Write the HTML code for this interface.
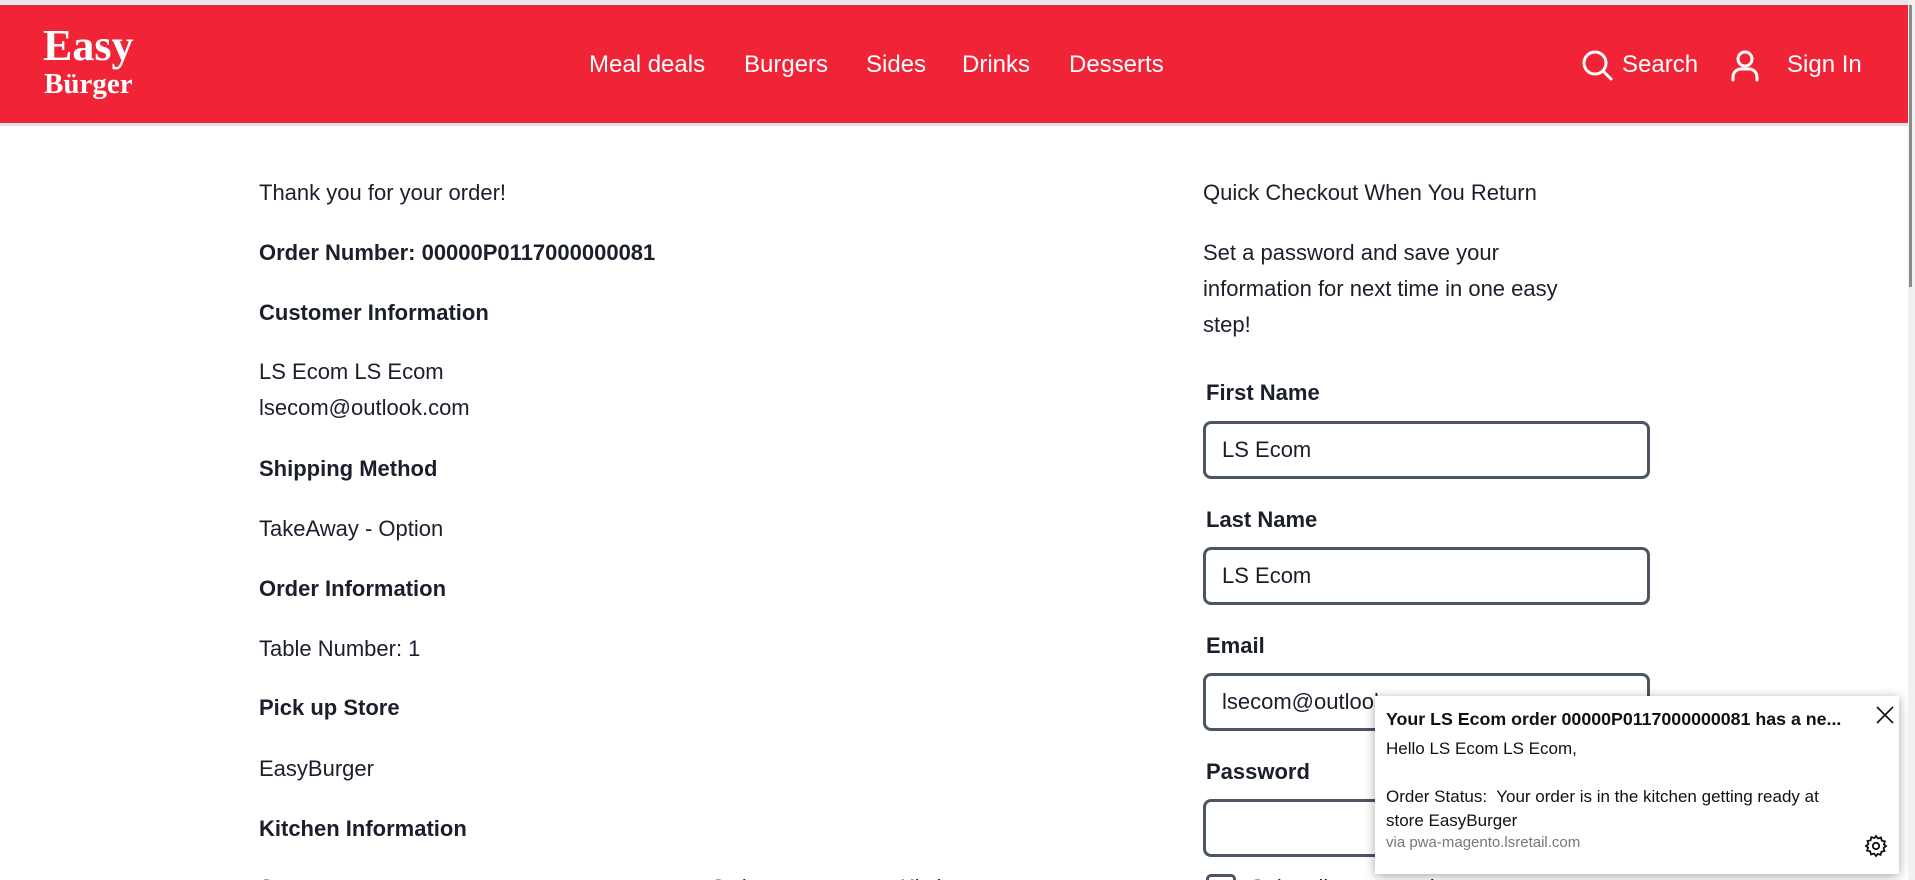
<!DOCTYPE html>
<html style="height:880px;overflow:hidden"><head><meta charset="utf-8"><style>
*{margin:0;padding:0;box-sizing:border-box}
body{width:1915px;height:880px;overflow:hidden;background:#fff;font-family:"Liberation Sans",sans-serif;color:#1a1f2b;position:relative}
.top{position:absolute;left:0;top:0;width:1915px;height:5px;background:#e5e7eb}
.hdr{position:absolute;left:0;top:5px;width:1908px;height:118px;background:#f02337}
.hline{position:absolute;left:0;top:123px;width:1908px;height:3px;background:#dfe1e5}
.logo{position:absolute;color:#fff;font-family:"Liberation Serif",serif;font-weight:bold}
.nav{position:absolute;top:51px;color:#fff;font-size:24px}
.t{position:absolute;font-size:22px;line-height:36px;white-space:nowrap}
.b{font-weight:bold}
.lbl{position:absolute;left:1206px;font-size:22px;font-weight:bold}
.inp{position:absolute;left:1203px;width:447px;height:58px;border:3px solid #4b5563;border-radius:8px;font-size:22px;padding:13px 0 0 16px}
.sb{position:absolute;left:1908px;top:0;width:7px;height:880px;background:#f1f1f1}
.sbt{position:absolute;left:1909px;top:5px;width:3px;height:282px;background:#8a8a8a}
.note{position:absolute;left:1375px;top:696px;width:524px;height:178px;background:#fff;box-shadow:0 2px 10px rgba(0,0,0,.35);font-family:"Liberation Sans",sans-serif;color:#111}
</style></head><body>
<div class="top"></div><div class="hdr"></div><div class="hline"></div>
<div class="logo" style="left:43px;top:24px;font-size:44px;line-height:44px">Easy</div>
<div class="logo" style="left:44px;top:68px;font-size:29px;line-height:32px">Bürger</div>
<div class="nav" style="left:589px">Meal deals</div>
<div class="nav" style="left:744px">Burgers</div>
<div class="nav" style="left:866px">Sides</div>
<div class="nav" style="left:962px">Drinks</div>
<div class="nav" style="left:1069px">Desserts</div>
<svg style="position:absolute;left:1582px;top:50px" width="32" height="32" viewBox="0 0 32 32" fill="none" stroke="#fff" stroke-width="3" stroke-linecap="round"><circle cx="13" cy="13" r="11"/><path d="M21 21l8 8"/></svg>
<div class="nav" style="left:1622px">Search</div>
<svg style="position:absolute;left:1730px;top:50px" width="30" height="32" viewBox="0 0 30 32" fill="none" stroke="#fff" stroke-width="3" stroke-linecap="round"><circle cx="15" cy="9" r="7"/><path d="M3 30v-3a8 8 0 0 1 8-8h8a8 8 0 0 1 8 8v3"/></svg>
<div class="nav" style="left:1787px">Sign In</div>

<div class="t" style="left:259px;top:175px">Thank you for your order!</div>
<div class="t b" style="left:259px;top:235px">Order Number: 00000P0117000000081</div>
<div class="t b" style="left:259px;top:295px">Customer Information</div>
<div class="t" style="left:259px;top:354px">LS Ecom LS Ecom</div>
<div class="t" style="left:259px;top:390px">lsecom@outlook.com</div>
<div class="t b" style="left:259px;top:451px">Shipping Method</div>
<div class="t" style="left:259px;top:511px">TakeAway - Option</div>
<div class="t b" style="left:259px;top:571px">Order Information</div>
<div class="t" style="left:259px;top:631px">Table Number: 1</div>
<div class="t b" style="left:259px;top:690px">Pick up Store</div>
<div class="t" style="left:259px;top:751px">EasyBurger</div>
<div class="t b" style="left:259px;top:811px">Kitchen Information</div>
<div class="t" style="left:259px;top:870px">Status</div>
<div class="t" style="left:710px;top:870px">Order</div>
<div class="t" style="left:900px;top:870px">Kitchen</div>

<div class="t" style="left:1203px;top:175px">Quick Checkout When You Return</div>
<div class="t" style="left:1203px;top:235px">Set a password and save your</div>
<div class="t" style="left:1203px;top:271px">information for next time in one easy</div>
<div class="t" style="left:1203px;top:307px">step!</div>
<div class="lbl" style="top:380px">First Name</div>
<div class="inp" style="top:421px">LS Ecom</div>
<div class="lbl" style="top:507px">Last Name</div>
<div class="inp" style="top:547px">LS Ecom</div>
<div class="lbl" style="top:633px">Email</div>
<div class="inp" style="top:673px">lsecom@outlook.com</div>
<div class="lbl" style="top:759px">Password</div>
<div class="inp" style="top:799px"></div>
<div style="position:absolute;left:1206px;top:874px;width:30px;height:30px;border:3px solid #4b5563;border-radius:5px"></div>
<div class="t" style="left:1250px;top:870px">Subscribe to newsletter</div>

<div class="note">
<div style="position:absolute;left:11px;top:13px;font-size:17.8px;font-weight:bold;white-space:nowrap">Your LS Ecom order 00000P0117000000081 has a ne...</div>
<svg style="position:absolute;top:8px;left:499px" width="22" height="22" viewBox="0 0 22 22" stroke="#111" stroke-width="1.6"><path d="M3 3l16 16M19 3L3 19"/></svg>
<div style="position:absolute;left:11px;top:41px;font-size:17px;line-height:24px">Hello LS Ecom LS Ecom,<br><br>Order Status:&nbsp; Your order is in the kitchen getting ready at<br>store EasyBurger</div>
<div style="position:absolute;left:11px;top:138px;font-size:15px;color:#777">via pwa-magento.lsretail.com</div>
<svg style="position:absolute;left:489px;top:138px" width="24" height="24" viewBox="0 0 24 24" fill="none" stroke="#111" stroke-width="1.8"><circle cx="12" cy="12" r="3.2"/><path d="M12 2l2 2.5 3-1 .8 3.1 3.1.8-1 3L22 12l-2.5 2 1 3-3.1.8-.8 3.1-3-1L12 22l-2-2.5-3 1-.8-3.1-3.1-.8 1-3L2 12l2.5-2-1-3 3.1-.8.8-3.1 3 1z"/></svg>
</div>
<div class="sb"></div><div class="sbt"></div>
</body></html>
